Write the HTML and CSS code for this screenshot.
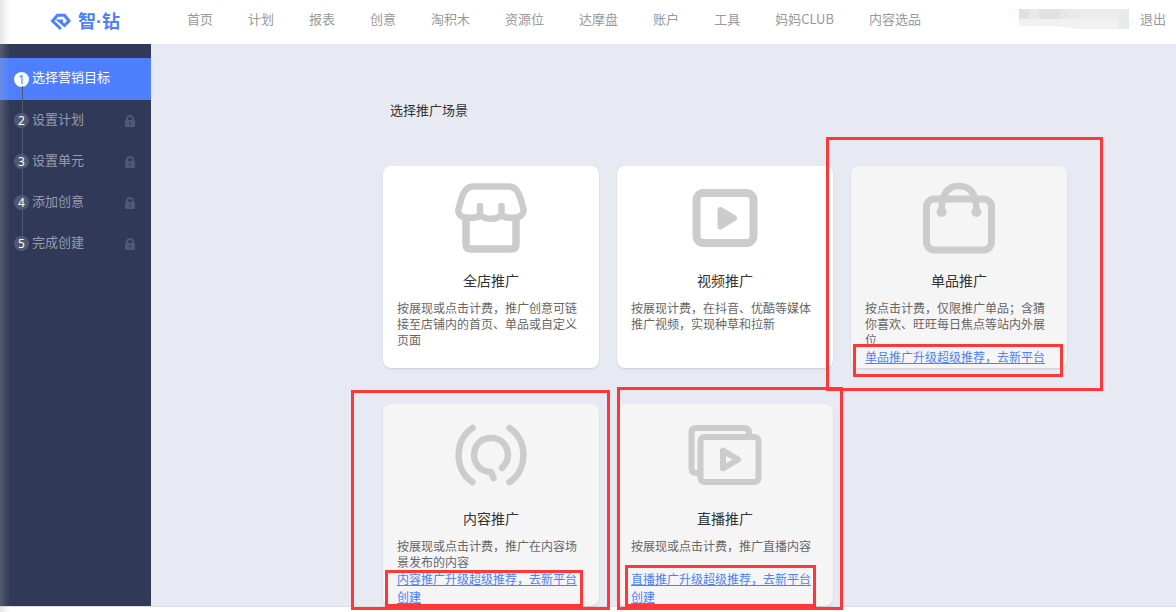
FILE: index.html
```html
<!DOCTYPE html>
<html lang="zh-CN">
<head>
<meta charset="utf-8">
<title>智钻</title>
<link rel="stylesheet" href="styles.css">
</head>
<body>
<header class="topbar">
  <a class="brand" href="#">
    <svg class="brand-mark" viewBox="0 0 22 18" aria-hidden="true"><path d="M11 16L2.500 8L7.500 2.300H14.500L19 8L14.500 12.500L9.500 8H13"/></svg>
    <span>智·钻</span>
  </a>
  <nav class="nav">
    <a href="#">首页</a><a href="#">计划</a><a href="#">报表</a><a href="#">创意</a><a href="#">淘积木</a><a href="#">资源位</a><a href="#">达摩盘</a><a href="#">账户</a><a href="#">工具</a><a href="#">妈妈CLUB</a><a href="#">内容选品</a>
  </nav>
  <div class="account">
    <svg class="masked" viewBox="0 0 125 20" aria-hidden="true" shape-rendering="crispEdges"><path fill="#fdfcfb" d="M0 0h10v15L0 12z"/><path fill="#e0e1e3" d="M10 0h10v10H10zM30 0h20v10H30z"/><path fill="#ebe9e7" d="M20 0h10v10H20z"/><path fill="#e5e6e9" d="M50 0h10v10H50z"/><path fill="#ece9e8" d="M60 0h10v10H60z"/><path fill="#ebeceb" d="M70 0h40v10H70z"/><path fill="#f1f1f1" d="M10 10h100v10H65l-5-2H46v-1H10z"/><path fill="#e8e9ec" d="M110 0h10v20h-10z"/><path fill="#fafafa" d="M120 10h5v5l-5 3z"/></svg>
    <a href="#">退出</a>
  </div>
</header>
<div class="layout">
  <aside class="sidebar">
    <ol class="steps">
      <li class="step current"><span class="num">1</span><span class="label">选择营销目标</span></li>
      <li class="step"><span class="num">2</span><span class="label">设置计划</span><svg class="lock" viewBox="0 0 12 12"><use href="#lock"/></svg></li>
      <li class="step"><span class="num">3</span><span class="label">设置单元</span><svg class="lock" viewBox="0 0 12 12"><use href="#lock"/></svg></li>
      <li class="step"><span class="num">4</span><span class="label">添加创意</span><svg class="lock" viewBox="0 0 12 12"><use href="#lock"/></svg></li>
      <li class="step"><span class="num">5</span><span class="label">完成创建</span><svg class="lock" viewBox="0 0 12 12"><use href="#lock"/></svg></li>
    </ol>
  </aside>
  <main class="content">
    <h1 class="heading">选择推广场景</h1>
    <div class="cards">
      <section class="card">
        <svg class="icon" viewBox="0 0 76 76" aria-hidden="true"><path stroke-width="6.500" d="M20 6.500H56C63 6.500 66 13 68 20L70.500 29C71.500 34 67 37.500 62 37.500C57 37.500 52 39 48.500 35C44 40 32 40 27 35C24 39 18 37.500 13 37.500C8 37.500 4.500 34 5.500 29L8 20C10 13 13 6.500 20 6.500ZM27 35V26M48.500 35V26"/><path stroke-width="7.500" d="M13 39V64Q13 69 18 69H58Q63 69 63 64V39"/></svg>
        <h2>全店推广</h2>
        <p>按展现或点击计费，推广创意可链接至店铺内的首页、单品或自定义页面</p>
      </section>
      <section class="card">
        <svg class="icon" viewBox="0 0 76 76" aria-hidden="true"><rect x="9.500" y="13" width="57" height="50" rx="7" stroke-width="8"/><path class="solid" stroke-width="6" d="M33.500 30V46.500L47 38Z"/></svg>
        <h2>视频推广</h2>
        <p>按展现计费，在抖音、优酷等媒体推广视频，实现种草和拉新</p>
      </section>
      <section class="card muted">
        <svg class="icon" viewBox="0 0 76 76" aria-hidden="true"><rect x="5.500" y="19" width="65" height="51" rx="8" stroke-width="7"/><path stroke-width="6.500" d="M20.500 31C20.500 15 26 6 38 6S55.500 15 55.500 31"/><circle class="dot" cx="20.500" cy="32" r="5"/><circle class="dot" cx="55.500" cy="32" r="5"/></svg>
        <h2>单品推广</h2>
        <p>按点击计费，仅限推广单品；含猜你喜欢、旺旺每日焦点等站内外展位</p>
        <a class="upgrade" href="#">单品推广升级超级推荐，去新平台</a>
        <span class="mark mark-item"></span><span class="mark mark-item-link"></span>
      </section>
      <section class="card muted">
        <svg class="icon" viewBox="0 0 76 76" aria-hidden="true"><path stroke-width="6.500" d="M19.500 10C1 22 1 52 19.500 64M56.500 10C75 22 75 52 56.500 64M49 50C60 40 55 20 38 20C16 20 15 53 38 54L40.500 60"/></svg>
        <h2>内容推广</h2>
        <p>按展现或点击计费，推广在内容场景发布的内容</p>
        <a class="upgrade" href="#">内容推广升级超级推荐，去新平台创建</a>
        <span class="mark mark-content"></span><span class="mark mark-content-link"></span>
      </section>
      <section class="card muted">
        <svg class="icon" viewBox="0 0 76 76" aria-hidden="true"><path stroke-width="6" stroke-linecap="butt" d="M12 55H9Q4.500 55 4.500 50V15Q4.500 10 9 10H57Q62 10 62 15V18"/><rect x="13.500" y="19" width="58" height="45" rx="4" stroke-width="6"/><path stroke-width="6" d="M36 32.500V50.500L51 41.500Z"/></svg>
        <h2>直播推广</h2>
        <p>按展现或点击计费，推广直播内容</p>
        <a class="upgrade" href="#">直播推广升级超级推荐，去新平台创建</a>
        <span class="mark mark-live"></span><span class="mark mark-live-link"></span>
      </section>
    </div>
  </main>
</div>
<svg class="defs" aria-hidden="true"><defs><g id="lock"><path fill="none" stroke="#505973" stroke-width="2" d="M3 6V4A3 3 0 0 1 9 4V6"/><rect x="1" y="5" width="10" height="7" rx="1" fill="#505973"/><path stroke="#303957" d="M6 7V10"/></g></defs></svg>
</body>
</html>
```

FILE: styles.css
```css
* { box-sizing: border-box; }
body {
  margin: 0;
  min-height: 100vh;
  background: #fff;
  color: #333;
  font: 13px/20px "Noto Sans CJK SC", sans-serif;
}
body::before {
  content: "";
  position: fixed;
  inset: 0 auto 0 0;
  width: 10px;
  background: linear-gradient(90deg, rgba(170, 170, 170, .3), rgba(170, 170, 170, 0));
  z-index: 5;
  pointer-events: none;
}
a { color: inherit; text-decoration: none; }
.topbar {
  display: flex;
  height: 44px;
  align-items: center;
  padding: 0 10px 6px 50px;
  color: #999;
}
.brand {
  display: flex;
  align-items: center;
  gap: 6px;
  width: 137px;
  padding-top: 6px;
  color: #4d7fff;
  font-family: "Liberation Sans", "Noto Sans CJK SC", sans-serif;
  font-size: 18px;
  font-weight: 700;
}
.brand-mark {
  width: 22px;
  height: 18px;
  fill: none;
  stroke: currentColor;
  stroke-width: 3;
}
.nav { display: flex; gap: 35px; }
.account { display: flex; align-items: center; gap: 6px; margin-left: auto; }
.masked { width: 125px; height: 20px; }
.layout {
  display: flex;
  background: #e7eaf2;
  border-bottom: 1px solid #dcdde0;
}
.sidebar { flex: 0 0 151px; padding-top: 14px; background: #303957; }
.steps { margin: 0; padding: 0; list-style: none; }
.step {
  position: relative;
  display: flex;
  align-items: center;
  gap: 3px;
  height: 41px;
  padding: 0 15px 0 14px;
  color: #989cab;
}
.current { height: 42px; background: #4d7fff; color: #fff; }
.step + .step::before {
  content: "";
  position: absolute;
  left: 22px;
  top: -14px;
  width: 1px;
  height: 28px;
  background: #505973;
}
.num {
  width: 15px;
  height: 15px;
  border-radius: 50%;
  background: #505973;
  color: #fff;
  font: 12px/15px "Noto Sans", sans-serif;
  text-align: center;
}
.current .num { background: #fff; color: #4d7fff; }
.label { padding-bottom: 4px; }
.lock { width: 12px; height: 12px; margin-left: auto; }
.content { flex: 1; padding: 56px 0 0 232px; }
.heading { margin: 0 0 46px 7px; font-size: 13px; font-weight: 400; line-height: 20px; }
.cards { display: grid; grid-template-columns: repeat(auto-fill, 216px); gap: 36px 18px; max-width: 684px; }
.card {
  position: relative;
  height: 202px;
  padding: 14px 14px 0;
  border-radius: 8px;
  background: #fff;
  box-shadow: 0 1px 2px rgba(0, 0, 0, .12);
}
.muted { background: #f5f5f5; }
.icon {
  display: block;
  width: 76px;
  height: 76px;
  margin: 0 auto 14px;
  fill: none;
  stroke: #ccc;
  stroke-linecap: round;
  stroke-linejoin: round;
}
.solid { fill: #ccc; }
.dot { fill: #ccc; stroke: none; }
.card h2 { margin: 0 0 10px; font-size: 14px; font-weight: 400; line-height: 20px; text-align: center; }
.card p { min-height: 32px; margin: 0; color: #666; font-size: 12px; line-height: 16px; }
.upgrade { display: block; color: #4d7fff; font-size: 12px; line-height: 18px; text-decoration: underline; }
.mark { position: absolute; border: 3px solid #fe3838; pointer-events: none; z-index: 2; }
.mark-item { left: -25px; top: -29px; width: 277px; height: 254px; }
.mark-item-link { left: 2px; top: 178px; width: 210px; height: 33px; }
.mark-content { left: -32px; top: -14px; width: 259px; height: 220px; }
.mark-content-link { left: 2px; top: 166px; width: 198px; height: 37px; }
.mark-live { left: 0; top: -17px; width: 226px; height: 223px; }
.mark-live-link { left: 8px; top: 161px; width: 191px; height: 42px; }
.defs { position: absolute; width: 0; height: 0; }
```
